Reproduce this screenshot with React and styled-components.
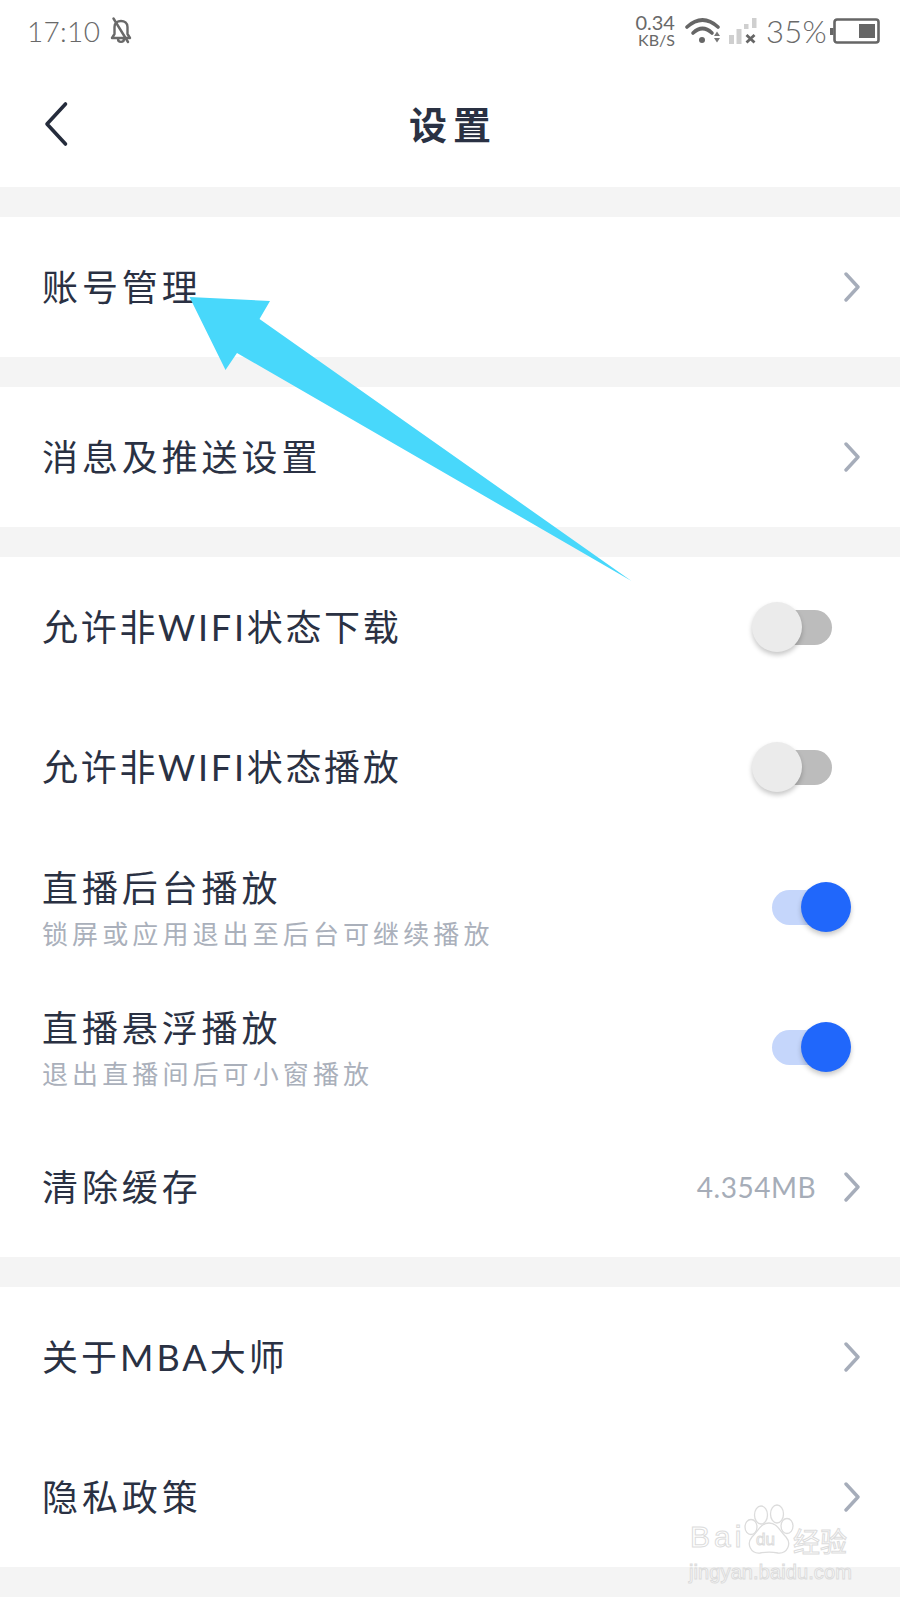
import React from "react";
import styled, { createGlobalStyle } from "styled-components";

const GlobalStyle = createGlobalStyle`
  html, body {
    margin: 0;
    padding: 0;
    background: #fff;
  }
  body {
    font-family: Lato, "Noto Sans CJK SC", sans-serif;
  }
`;

const Page = styled.div`
  position: relative;
  width: 900px;
  height: 1600px;
  overflow: hidden;
  display: flex;
  flex-direction: column;
  background: #fff;
`;

const StatusBar = styled.div`
  height: 62px;
  display: flex;
  align-items: center;
  justify-content: space-between;
  padding: 0 20px 1px 27px;
  box-sizing: border-box;
  color: #696969;
`;

const StatusGroup = styled.div`
  display: flex;
  align-items: center;
  gap: ${(p) => p.$gap || 0}px;
`;

const Clock = styled.span`
  font-size: 28px;
  font-weight: 300;
  letter-spacing: 0.3px;
`;

const Speed = styled.div`
  display: flex;
  flex-direction: column;
  align-items: flex-end;
  width: 50px;
  font-size: 20px;
  line-height: 18px;
  margin-right: 2px;
  span + span {
    font-size: 16px;
    line-height: 17px;
  }
`;

const Battery = styled.span`
  font-size: 31px;
  font-weight: 300;
  margin: 0 -3px 0 3px;
  letter-spacing: 0.3px;
`;

const Header = styled.header`
  position: relative;
  height: 125px;
  padding: 0 0 4px 6px;
  box-sizing: border-box;
  display: flex;
  align-items: center;
  justify-content: center;
`;

const BackButton = styled.svg`
  position: absolute;
  left: 43px;
  top: 39px;
`;

const Title = styled.h1`
  margin: 0;
  font-size: 38px;
  font-weight: 700;
  letter-spacing: 6px;
  color: #2a3143;
`;

const Band = styled.div`
  height: 30px;
  background: #f4f4f4;
`;

const Section = styled.section`
  display: flex;
  flex-direction: column;
`;

const Row = styled.div`
  height: 140px;
  display: flex;
  align-items: center;
  justify-content: space-between;
  padding: 0 39px 0 42px;
  box-sizing: border-box;
`;

const Labels = styled.div`
  display: flex;
  flex-direction: column;
  padding-top: 3px;
`;

const Label = styled.div`
  font-size: 36px;
  line-height: 44px;
  letter-spacing: ${(p) => p.$spacing ?? 3.9}px;
  color: #2a3143;
`;

const Hint = styled.div`
  margin-top: 6px;
  font-size: 26px;
  line-height: 36px;
  letter-spacing: 4.1px;
  color: #aab0bb;
`;

const Trailing = styled.div`
  display: flex;
  align-items: center;
  gap: 27px;
`;

const Value = styled.span`
  font-size: 28px;
  letter-spacing: 0.5px;
  color: #a6adb8;
`;

const Track = styled.div`
  position: relative;
  width: 60px;
  height: 35px;
  margin-right: 29px;
  border-radius: 18px;
  background: ${(p) => (p.$on ? "#c5d6fb" : "#bcbcbc")};
`;

const Knob = styled.div`
  position: absolute;
  top: -8px;
  left: ${(p) => (p.$on ? "29px" : "-20px")};
  width: 50px;
  height: 50px;
  border-radius: 50%;
  background: ${(p) => (p.$on ? "#2067fb" : "#ebebeb")};
  box-shadow: 0 3px 5px rgba(0, 0, 0, 0.22);
`;

const Pointer = styled.svg`
  position: absolute;
  left: 0;
  top: 0;
  pointer-events: none;
`;

const Watermark = styled.div`
  position: absolute;
  left: 689px;
  top: 1503px;
  width: 170px;
  height: 80px;
  color: #fff;
  -webkit-text-stroke: 1px #dcdcdc;
  pointer-events: none;
`;

const MarkBai = styled.span`
  position: absolute;
  left: 1px;
  top: 17px;
  font-family: "Liberation Sans", sans-serif;
  font-size: 30px;
  letter-spacing: 4px;
  line-height: 34px;
`;

const MarkPaw = styled.svg`
  position: absolute;
  left: 55px;
  top: 1px;
`;

const MarkDu = styled.span`
  position: absolute;
  left: 67px;
  top: 27px;
  font-family: "Liberation Sans", sans-serif;
  font-size: 17px;
  line-height: 20px;
`;

const MarkCn = styled.span`
  position: absolute;
  left: 104px;
  top: 21px;
  font-size: 27px;
  line-height: 36px;
  white-space: nowrap;
`;

const MarkUrl = styled.span`
  position: absolute;
  left: 0;
  top: 57px;
  font-family: "Liberation Sans", sans-serif;
  font-size: 20px;
  letter-spacing: 0.1px;
  line-height: 24px;
  white-space: nowrap;
`;

const Chevron = () => (
  <svg width="18" height="30" viewBox="0 0 18 30" fill="none">
    <path d="M3 2 L15 15 L3 28" stroke="#a6adba" strokeWidth="3.4" strokeLinecap="round" strokeLinejoin="round" />
  </svg>
);

const Switch = ({ on }) => (
  <Track $on={on}>
    <Knob $on={on} />
  </Track>
);

const MuteBell = () => (
  <svg width="22" height="28" viewBox="0 0 22 28" fill="none" stroke="#696969" strokeWidth="2.4" strokeLinecap="round" strokeLinejoin="round">
    <path d="M2 21 L4.5 17 V10 C4.5 6 7.5 4 11 4 C14.500 4 17.500 6 17.500 10 V17 L20 21 Z" />
    <path d="M8 21.500 C8 26 14 26 14 21.500" />
    <path d="M3.500 1.500 L18 25" />
  </svg>
);

const WifiIcon = () => (
  <svg width="40" height="30" viewBox="0 0 40 30" fill="none">
    <path d="M4 11 Q19.500 -3 35 11" stroke="#666" strokeWidth="3.6" strokeLinecap="round" />
    <path d="M10 17 Q19.500 8 29 17" stroke="#666" strokeWidth="3.6" strokeLinecap="round" />
    <circle cx="19" cy="24" r="3" fill="#666" />
    <path d="M31 20 L34 15.500 L37 20 Z M31 22 L34 26.500 L37 22 Z" fill="#777" />
  </svg>
);

const SignalIcon = () => (
  <svg width="28" height="26" viewBox="0 0 28 26" fill="none">
    <rect x="0" y="17" width="5" height="9" fill="#cfcfcf" />
    <rect x="7.500" y="11" width="5" height="15" fill="#cfcfcf" />
    <rect x="15" y="6" width="4.500" height="5" fill="#cfcfcf" />
    <rect x="23" y="0" width="4.500" height="10" fill="#cfcfcf" />
    <path d="M17.500 17 L25.500 24.500 M25.500 17 L17.500 24.500" stroke="#666" strokeWidth="2.800" />
  </svg>
);

const BatteryIcon = () => (
  <svg width="50" height="26" viewBox="0 0 50 26" fill="none">
    <rect x="0" y="10" width="3.500" height="7" fill="#666" />
    <rect x="4.500" y="1.500" width="44" height="23" rx="2.500" stroke="#666" strokeWidth="2.600" />
    <rect x="29" y="6" width="16" height="14" fill="#666" />
  </svg>
);

const App = () => {
  return (
    <Page>
      <GlobalStyle />
      <StatusBar>
        <StatusGroup $gap={10}>
          <Clock>17:10</Clock>
          <MuteBell />
        </StatusGroup>
        <StatusGroup $gap={6}>
          <Speed>
            <span>0.34</span>
            <span>KB/S</span>
          </Speed>
          <WifiIcon />
          <SignalIcon />
          <Battery>35%</Battery>
          <BatteryIcon />
        </StatusGroup>
      </StatusBar>

      <Header>
        <BackButton width="26" height="46" viewBox="0 0 26 46" fill="none">
          <path d="M22.500 3 L4 23 L22.500 43" stroke="#252c3c" strokeWidth="3.600" strokeLinecap="round" strokeLinejoin="round" />
        </BackButton>
        <Title>设置</Title>
      </Header>

      <Band />
      <Section>
        <Row>
          <Label>账号管理</Label>
          <Chevron />
        </Row>
      </Section>
      <Band />
      <Section>
        <Row>
          <Label>消息及推送设置</Label>
          <Chevron />
        </Row>
      </Section>
      <Band />
      <Section>
        <Row>
          <Label $spacing={2.7}>允许非WIFI状态下载</Label>
          <Switch />
        </Row>
        <Row>
          <Label $spacing={2.7}>允许非WIFI状态播放</Label>
          <Switch />
        </Row>
        <Row>
          <Labels>
            <Label>直播后台播放</Label>
            <Hint>锁屏或应用退出至后台可继续播放</Hint>
          </Labels>
          <Switch on />
        </Row>
        <Row>
          <Labels>
            <Label>直播悬浮播放</Label>
            <Hint>退出直播间后可小窗播放</Hint>
          </Labels>
          <Switch on />
        </Row>
        <Row>
          <Label>清除缓存</Label>
          <Trailing>
            <Value>4.354MB</Value>
            <Chevron />
          </Trailing>
        </Row>
      </Section>
      <Band />
      <Section>
        <Row>
          <Label $spacing={3}>关于MBA大师</Label>
          <Chevron />
        </Row>
        <Row>
          <Label>隐私政策</Label>
          <Chevron />
        </Row>
      </Section>
      <Band />

      {/* callout arrow over the first rows */}
      <Pointer width="900" height="600" viewBox="0 0 900 600">
        <polygon points="189.500,297 270,301 259.500,319 631.500,581 237,353 225.500,370" fill="#48d8fb" />
      </Pointer>

      <Watermark>
        <MarkBai>Bai</MarkBai>
        <MarkPaw width="50" height="52" viewBox="0 0 50 52" fill="#fff" stroke="#dcdcdc" strokeWidth="1.300">
          <ellipse cx="17" cy="11" rx="6.500" ry="9" />
          <ellipse cx="33" cy="10" rx="6.500" ry="9" />
          <ellipse cx="7" cy="23" rx="6" ry="7.500" />
          <ellipse cx="43" cy="22" rx="6" ry="7.500" />
          <path d="M25 19 C33 19 36 27 42 33 C48 40 43 50 34 49 C29 48 21 48 16 49 C7 50 2 40 8 33 C14 27 17 19 25 19 Z" />
        </MarkPaw>
        <MarkDu>du</MarkDu>
        <MarkCn>经验</MarkCn>
        <MarkUrl>jingyan.baidu.com</MarkUrl>
      </Watermark>
    </Page>
  );
};

export default App;
